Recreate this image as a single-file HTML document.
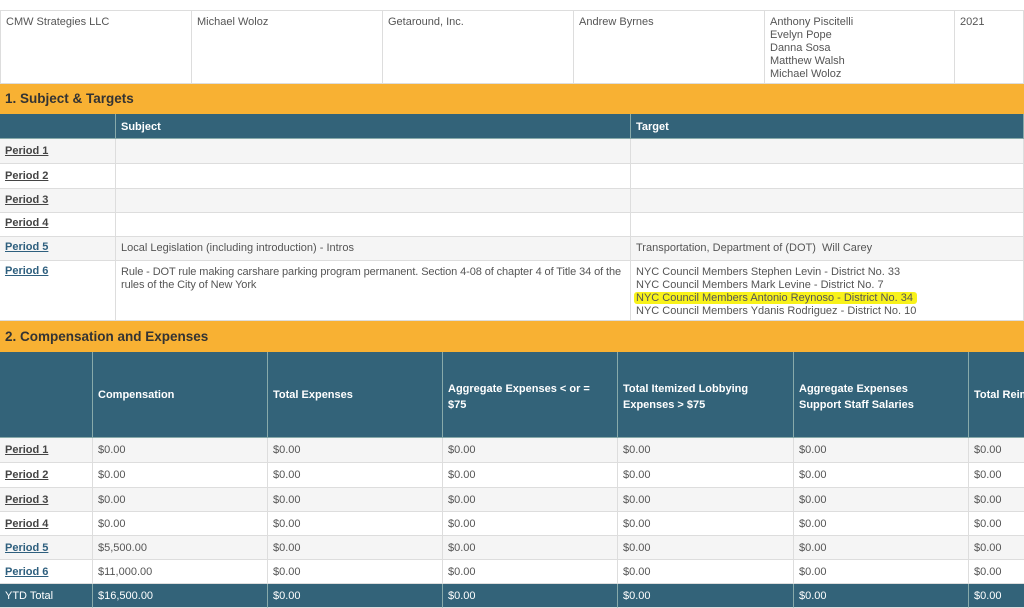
<!DOCTYPE html>
<html><head><meta charset="utf-8"><style>
*{margin:0;padding:0;box-sizing:border-box}
body{width:1024px;height:608px;overflow:hidden;background:#fff;font-family:"Liberation Sans",Arial,sans-serif;font-size:11px;color:#555;position:relative}
.c{position:absolute;border-right:1px solid #ddd;border-bottom:1px solid #ddd;padding:5px 5px;line-height:13px}
.h{background:#336379;color:#fff;font-weight:bold;border-right:1px solid #8aa;border-bottom:1px solid #8aa}
.o{position:absolute;left:0;width:1024px;background:#f8b133;color:#333;font-weight:bold;font-size:13.5px;padding-left:5px}
a{color:#444;font-weight:bold;text-decoration:underline}
a.b{color:#2e5f7e}
.g{background:#f5f5f5}
.t{background:#336379;color:#fff;border-right:1px solid #8aa}
</style></head><body>
<div style="position:absolute;left:0;top:10px;width:1024px;border-top:1px solid #ddd"></div>
<div class="c" style="left:0;top:11px;width:192px;height:73px;border-left:1px solid #ddd">CMW Strategies LLC</div>
<div class="c" style="left:192px;top:11px;width:191px;height:73px">Michael Woloz</div>
<div class="c" style="left:383px;top:11px;width:191px;height:73px">Getaround, Inc.</div>
<div class="c" style="left:574px;top:11px;width:191px;height:73px">Andrew Byrnes</div>
<div class="c" style="left:765px;top:11px;width:190px;height:73px">Anthony Piscitelli<br>Evelyn Pope<br>Danna Sosa<br>Matthew Walsh<br>Michael Woloz</div>
<div class="c" style="left:955px;top:11px;width:69px;height:73px">2021</div>

<div class="o" style="top:84px;height:30px;line-height:30px">1. Subject &amp; Targets</div>
<div class="c h" style="left:0;top:114px;width:116px;height:25px"></div>
<div class="c h" style="left:116px;top:114px;width:515px;height:25px;padding-top:7px">Subject</div>
<div class="c h" style="left:631px;top:114px;width:393px;height:25px;padding-top:7px">Target</div>

<div class="c g" style="left:0;top:139px;width:116px;height:25px;padding-top:6px"><a>Period 1</a></div>
<div class="c g" style="left:116px;top:139px;width:515px;height:25px"></div>
<div class="c g" style="left:631px;top:139px;width:393px;height:25px"></div>
<div class="c" style="left:0;top:164px;width:116px;height:25px;padding-top:6px"><a>Period 2</a></div>
<div class="c" style="left:116px;top:164px;width:515px;height:25px"></div>
<div class="c" style="left:631px;top:164px;width:393px;height:25px"></div>
<div class="c g" style="left:0;top:189px;width:116px;height:24px;padding-top:5px"><a>Period 3</a></div>
<div class="c g" style="left:116px;top:189px;width:515px;height:24px"></div>
<div class="c g" style="left:631px;top:189px;width:393px;height:24px"></div>
<div class="c" style="left:0;top:213px;width:116px;height:24px;padding-top:4px"><a>Period 4</a></div>
<div class="c" style="left:116px;top:213px;width:515px;height:24px"></div>
<div class="c" style="left:631px;top:213px;width:393px;height:24px"></div>
<div class="c g" style="left:0;top:237px;width:116px;height:24px;padding-top:4px"><a class="b">Period 5</a></div>
<div class="c g" style="left:116px;top:237px;width:515px;height:24px;padding-top:5px">Local Legislation (including introduction) - Intros</div>
<div class="c g" style="left:631px;top:237px;width:393px;height:24px;padding-top:5px">Transportation, Department of (DOT)&nbsp; Will Carey</div>
<div class="c" style="left:0;top:261px;width:116px;height:60px;padding-top:4px"><a class="b">Period 6</a></div>
<div class="c" style="left:116px;top:261px;width:515px;height:60px;padding-right:0;letter-spacing:-0.1px">Rule - DOT rule making carshare parking program permanent. Section 4-08 of chapter 4 of Title 34 of the rules of the City of New York</div>
<div class="c" style="left:631px;top:261px;width:393px;height:60px">NYC Council Members Stephen Levin - District No. 33<br>NYC Council Members Mark Levine - District No. 7<br><span style="background:#f8f21a;padding:0 4px 0 2px;margin-left:-2px;border-radius:3px">NYC Council Members Antonio Reynoso - District No. 34</span><br>NYC Council Members Ydanis Rodriguez - District No. 10</div>

<div class="o" style="top:321px;height:31px;line-height:31px">2. Compensation and Expenses</div>
<div class="c h" style="left:0;top:352px;width:93px;height:86px"></div>
<div class="c h" style="left:93px;top:352px;width:175px;height:86px;padding-top:37px">Compensation</div>
<div class="c h" style="left:268px;top:352px;width:175px;height:86px;padding-top:37px">Total Expenses</div>
<div class="c h" style="left:443px;top:352px;width:175px;height:86px;padding-top:29px;line-height:16px">Aggregate Expenses &lt; or =<br>$75</div>
<div class="c h" style="left:618px;top:352px;width:176px;height:86px;padding-top:29px;line-height:16px">Total Itemized Lobbying<br>Expenses &gt; $75</div>
<div class="c h" style="left:794px;top:352px;width:175px;height:86px;padding-top:29px;line-height:16px">Aggregate Expenses<br>Support Staff Salaries</div>
<div class="c h" style="left:969px;top:352px;width:60px;height:86px;padding-top:37px;white-space:nowrap">Total Reimbursed</div>

<div id="rows"></div>
<script>
var tops=[438,463,488,512,536,560,584],vals=["$0.00","$0.00","$0.00","$0.00","$5,500.00","$11,000.00","$16,500.00"];
var xs=[0,93,268,443,618,794,969,1030],h="";
for(var i=0;i<7;i++){var t=tops[i],hh=tops[i+1]?tops[i+1]-t:24;
var cls=i==6?"c t":(i%2==0?"c g":"c");
for(var j=0;j<7;j++){var txt=j==0?(i==6?"YTD Total":'<a'+(i>=4?' class="b"':'')+'>Period '+(i+1)+'</a>'):(j==1?vals[i]:"$0.00");
h+='<div class="'+cls+'" style="left:'+xs[j]+'px;top:'+t+'px;width:'+(xs[j+1]-xs[j])+'px;height:'+hh+'px;padding-top:6px;white-space:nowrap;overflow:hidden">'+txt+'</div>';}}
document.getElementById("rows").innerHTML=h;
</script>
</body></html>
